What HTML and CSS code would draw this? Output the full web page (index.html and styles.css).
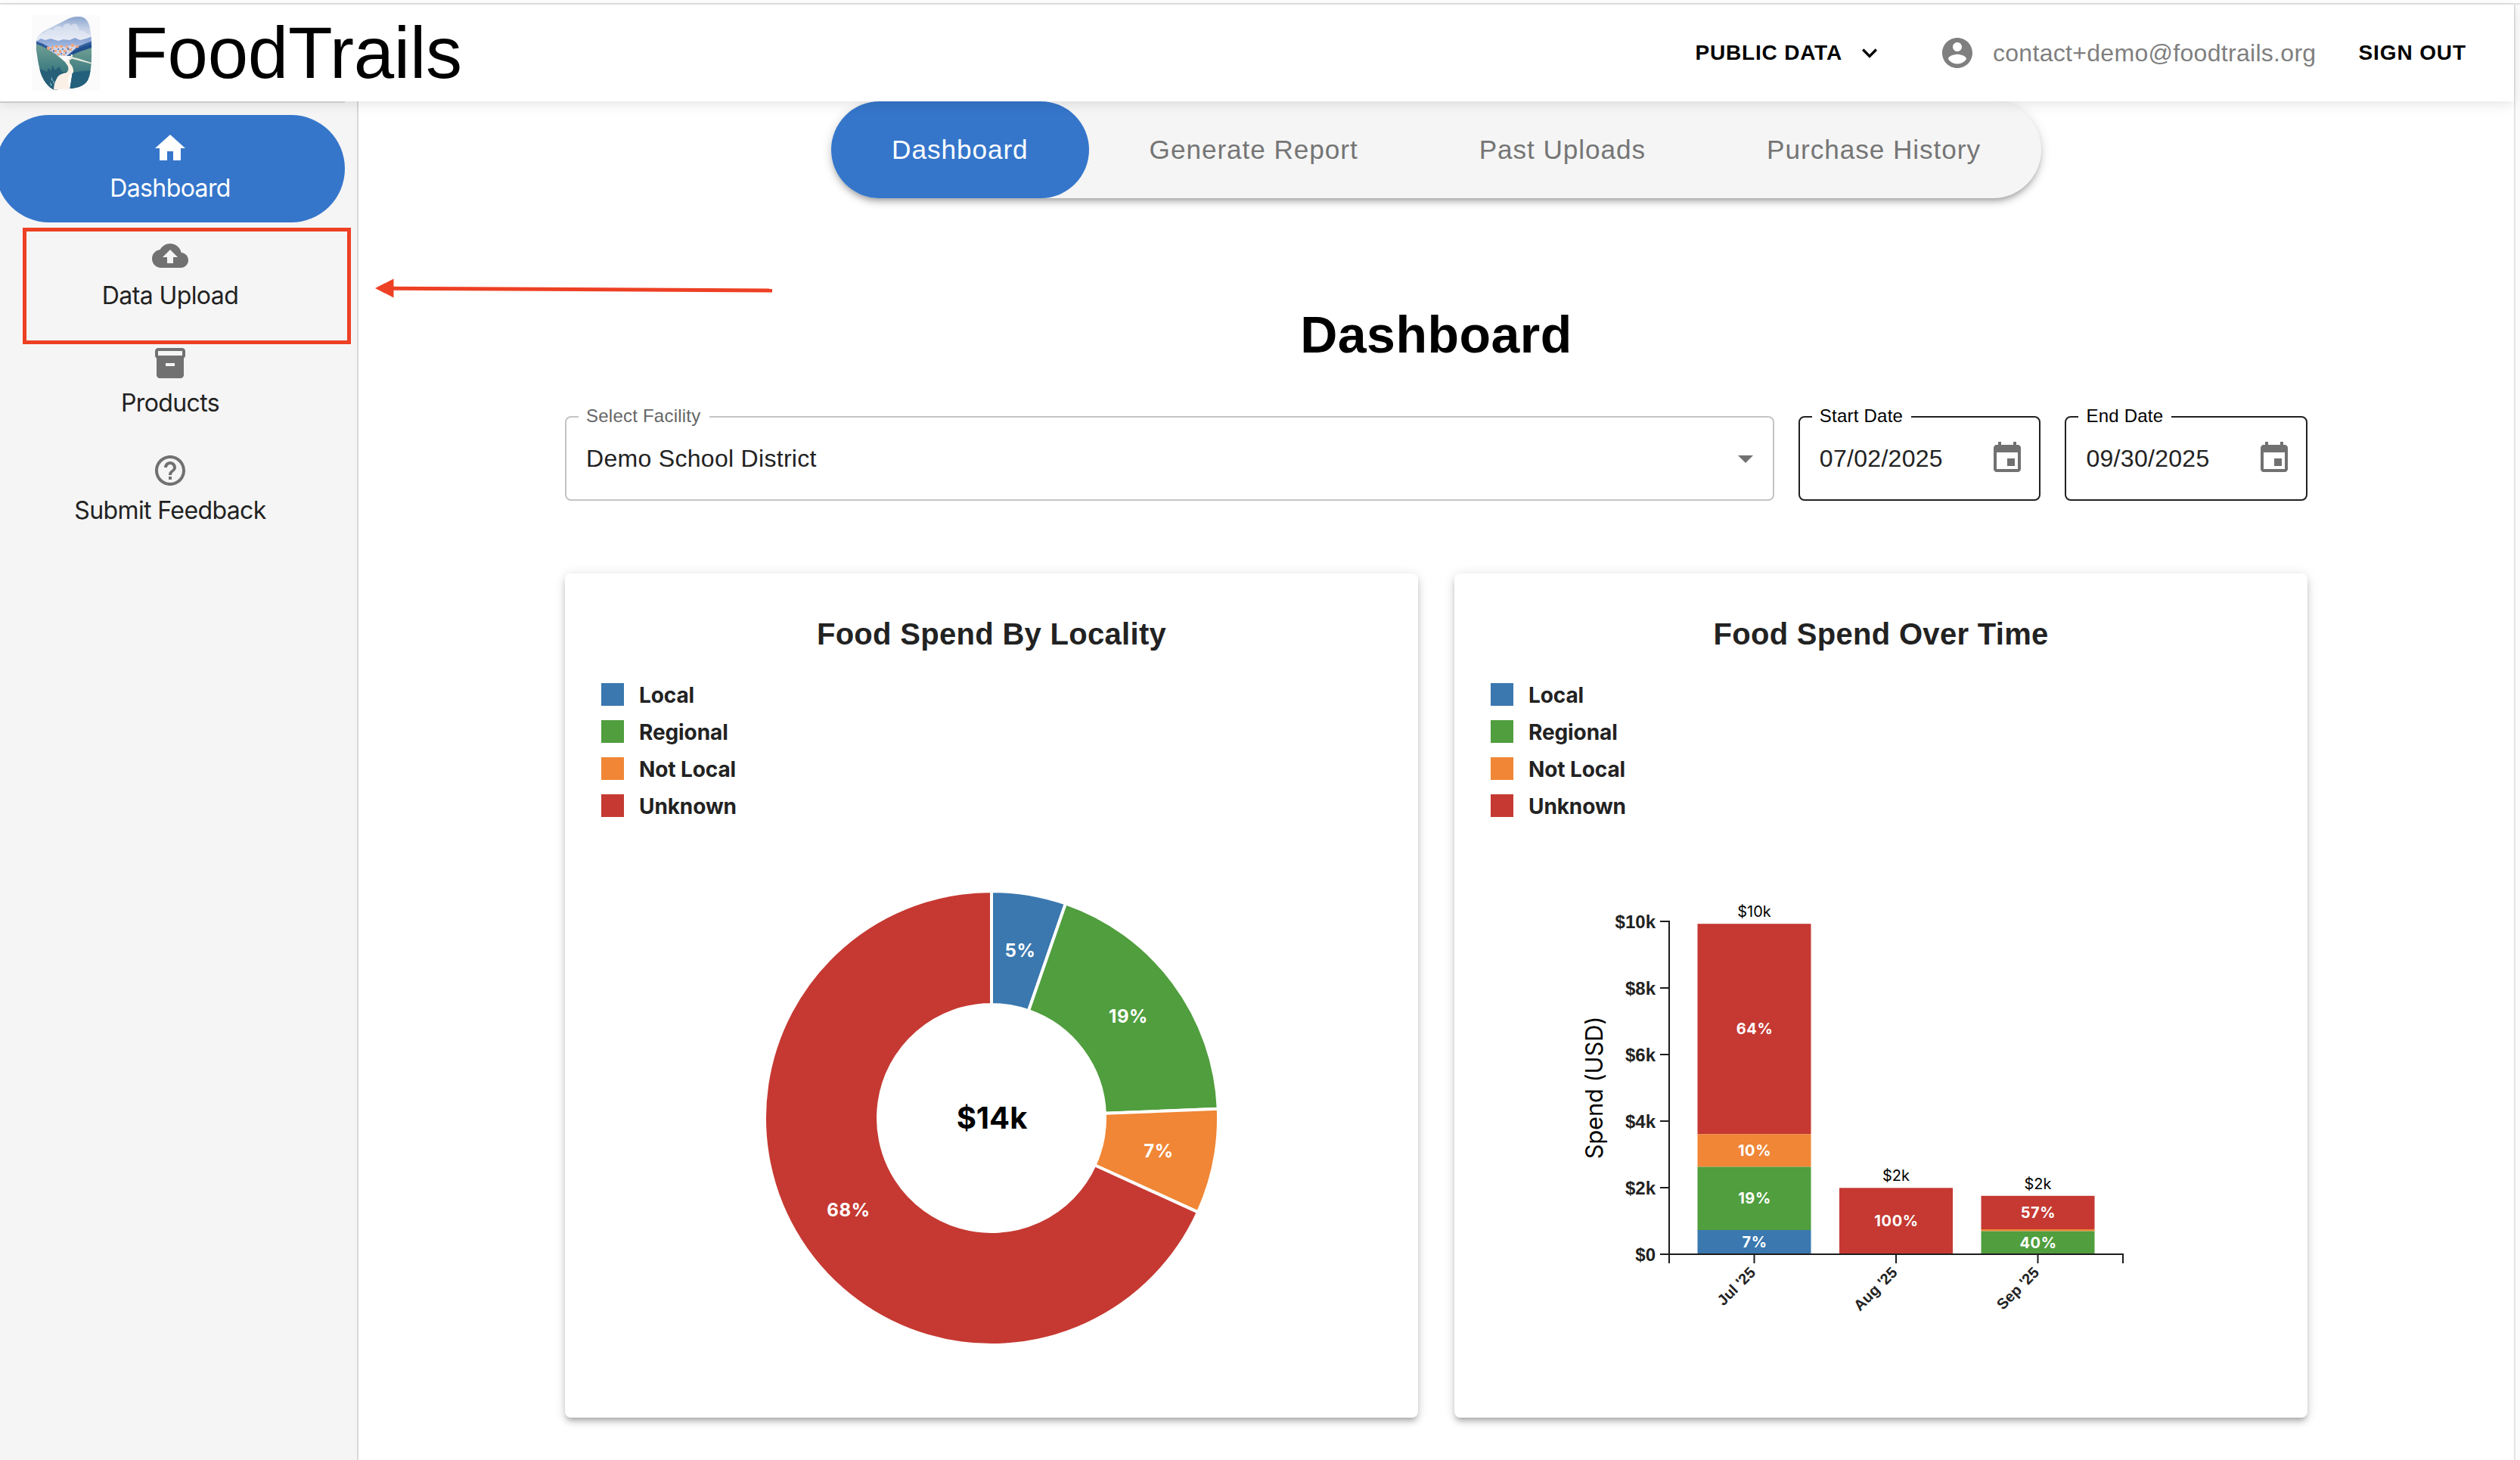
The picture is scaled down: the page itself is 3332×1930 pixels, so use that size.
FILE: index.html
```html
<!DOCTYPE html>
<html lang="en">
<head>
<meta charset="utf-8">
<title>FoodTrails</title>
<link rel="stylesheet" href="styles.css">
</head>
<body>
<div class="window-edge"></div>
<div class="viewport">
<div class="app">
  <header class="topbar">
    <svg class="logo" viewBox="0 0 90 100">
      <defs>
        <linearGradient id="sky" x1="0" y1="0" x2="0" y2="1"><stop offset="0" stop-color="#839fcb"/><stop offset=".4" stop-color="#c3d0e6"/><stop offset="1" stop-color="#eef1f8"/></linearGradient>
        <linearGradient id="cloud" x1="0" y1="0" x2="0" y2="1"><stop offset="0" stop-color="#cfd9ec"/><stop offset="1" stop-color="#f1f3f9"/></linearGradient>
        <linearGradient id="range" x1="0" y1="0" x2="0" y2="1"><stop offset="0" stop-color="#7e9bd0"/><stop offset="1" stop-color="#b9cbea"/></linearGradient>
        <linearGradient id="hill" x1="0" y1="0" x2="0" y2="1"><stop offset="0" stop-color="#6f9f93"/><stop offset=".5" stop-color="#447f83"/><stop offset="1" stop-color="#23607b"/></linearGradient>
        <clipPath id="stone"><path d="M61 2C70 1 75 7 77 17C79 28 79 38 79 50C79 66 78 78 74 86C70 93 62 96 52 97L29 98.500C22 95 16 88 12 77C8 64 6 48 6 36C6 28 12 23 20 19L44 7C51 3 56 2 61 2Z"/></clipPath>
      </defs>
      <rect width="90" height="100" fill="#fbfbfb"/>
      <g clip-path="url(#stone)">
        <rect width="90" height="45" fill="url(#sky)"/>
        <path d="M5 32C10 24 16 23 17 24C18 19 24 18 29 20C29 14 37 13 41 17C42 10 50 9 52 14C55 9 62 11 63 21C66 19 71 22 72 24L80 27V42H5Z" fill="url(#cloud)"/>
        <path d="M5 35L12 31L18 33L25 31L35 34L42 32L50 33L57 30L64 33L72 31L80 28V50H5Z" fill="url(#range)"/>
        <path d="M80 34L72 37L60 42L46 54H80Z" fill="#36619f"/>
        <path d="M5 34L15 38L26 44L34 54H5Z" fill="#2f5c9c"/>
        <path d="M80 38L66 42L52 50V56H80Z" fill="#214f8d"/>
        <path d="M20 44L34 40L44 42L56 39L60 42L46 54H32Z" fill="#cfd6e6"/>
        <g fill="#f0a680"><path d="M20 42h4v4h-4zM26 41h3v4h-3zM31 40h4v3h-4zM37 40h4v3h-4zM45 40h3v4h-3zM52 38h4v4h-4zM58 40h4v3h-4zM23 47h4v3h-4zM30 46h3v3h-3zM36 46h3v4h-3zM42 46h4v3h-4zM49 44h4v3h-4zM33 51h4v2h-4zM41 51h3v2h-3z"/></g>
        <g fill="#5f82bb"><path d="M24 44h2v2h-2zM28 46h2v3h-2zM34 44h2v2h-2zM40 44h2v2h-2zM44 49h2v2h-2zM38 50h2v2h-2zM47 43h2v3h-2zM30 51h2v2h-2z"/></g>
        <path d="M5 38C20 43 33 52 44 62L50 70L34 100H5Z" fill="url(#hill)"/>
        <path d="M80 43C66 47 56 51 52 54C48 60 50 66 54 74L50 100H80Z" fill="url(#hill)"/>
        <path d="M8 70L20 75L22 70L26 74L27 66L31 73L36 68L40 75H46L34 100H10Z" fill="#265f77"/>
        <path d="M54 75C62 76 68 72 80 74V100H50Z" fill="#23607b"/>
        <path d="M52 52L54 52L53.500 57.500L47 61L49 63L44 61L51 56.500Z" fill="#f8efe6"/>
        <path d="M52 55L64 58L79 63V64.500L62 60L51 57Z" fill="#e6eade"/>
        <path d="M44 61C49 67 50 73 46 76C40 77 35 79 33 84C30 89 29 94 29 99H52C46 92 46 80 55 76C56 68 51 64 47 61Z" fill="#fbf0e6"/>
        <path d="M26 81l2 6-2-1zM24 88l3 5-2 0zM29 86l1 5-2-2z" fill="#8fc1d2"/>
      </g>
    </svg>
    <div class="brand">FoodTrails</div>
    <nav class="account">
      <button class="public-data">PUBLIC DATA
        <svg class="chevron" viewBox="0 0 24 24"><path d="M7.410 8.590 12 13.170l4.590-4.580L18 10l-6 6-6-6z"/></svg>
      </button>
      <span class="user">
        <svg class="icon" viewBox="0 0 24 24"><path d="M12 2C6.480 2 2 6.480 2 12s4.480 10 10 10 10-4.480 10-10S17.520 2 12 2zm0 3c1.660 0 3 1.340 3 3s-1.340 3-3 3-3-1.340-3-3 1.340-3 3-3zm0 14.200c-2.500 0-4.710-1.280-6-3.220.030-1.990 4-3.080 6-3.080 1.990 0 5.970 1.090 6 3.080-1.290 1.940-3.500 3.220-6 3.220z"/></svg>
        <span class="email">contact+demo@foodtrails.org</span>
      </span>
      <button class="sign-out">SIGN OUT</button>
    </nav>
  </header>
  <div class="body">
    <aside class="sidebar">
      <div class="divider"></div>
      <a class="nav-item active">
        <svg class="icon" viewBox="0 0 24 24"><path d="M10 20v-6h4v6h5v-8h3L12 3 2 12h3v8z"/></svg>
        <span class="nav-label">Dashboard</span>
      </a>
      <a class="nav-item">
        <svg class="icon" viewBox="0 0 24 24"><path d="M19.350 10.040C18.670 6.590 15.640 4 12 4 9.110 4 6.600 5.640 5.350 8.040 2.340 8.360 0 10.910 0 14c0 3.310 2.690 6 6 6h13c2.760 0 5-2.240 5-5 0-2.640-2.050-4.780-4.650-4.960zM14 13v4h-4v-4H7l5-5 5 5h-3z"/></svg>
        <span class="nav-label">Data Upload</span>
      </a>
      <a class="nav-item">
        <svg class="icon" viewBox="0 0 24 24"><path d="M20 2H4c-1 0-2 .9-2 2v3.010c0 .720.430 1.340 1 1.690V20c0 1.100 1.100 2 2 2h14c.9 0 2-.9 2-2V8.700c.570-.350 1-.970 1-1.690V4c0-1.100-1-2-2-2zm-5 12H9v-2h6v2zm5-7H4V4h16v3z"/></svg>
        <span class="nav-label">Products</span>
      </a>
      <a class="nav-item">
        <svg class="icon" viewBox="0 0 24 24"><path d="M11 18h2v-2h-2v2zm1-16C6.480 2 2 6.480 2 12s4.480 10 10 10 10-4.480 10-10S17.520 2 12 2zm0 18c-4.410 0-8-3.590-8-8s3.590-8 8-8 8 3.590 8 8-3.590 8-8 8zm0-14c-2.210 0-4 1.790-4 4h2c0-1.100.9-2 2-2s2 .9 2 2c0 2-3 1.750-3 5h2c0-2.250 3-2.500 3-5 0-2.210-1.790-4-4-4z"/></svg>
        <span class="nav-label">Submit Feedback</span>
      </a>
    </aside>
    <main class="content">
      <div class="tabs">
        <a class="tab selected">Dashboard</a>
        <a class="tab">Generate Report</a>
        <a class="tab">Past Uploads</a>
        <a class="tab">Purchase History</a>
      </div>
      <h1 class="page-title">Dashboard</h1>
      <div class="filters">
        <div class="field facility">
          <label class="field-label">Select Facility</label>
          <span class="value">Demo School District</span>
          <svg class="icon" viewBox="0 0 24 24"><path d="M7 10l5 5 5-5z"/></svg>
        </div>
        <div class="field date">
          <label class="field-label">Start Date</label>
          <span class="value">07/02/2025</span>
          <svg class="icon" viewBox="0 0 24 24"><path d="M17 12h-5v5h5v-5zM16 1v2H8V1H6v2H5c-1.110 0-1.990.9-1.990 2L3 19c0 1.100.890 2 2 2h14c1.100 0 2-.9 2-2V5c0-1.100-.9-2-2-2h-1V1h-2zm3 18H5V8h14v11z"/></svg>
        </div>
        <div class="field date">
          <label class="field-label">End Date</label>
          <span class="value">09/30/2025</span>
          <svg class="icon" viewBox="0 0 24 24"><path d="M17 12h-5v5h5v-5zM16 1v2H8V1H6v2H5c-1.110 0-1.990.9-1.990 2L3 19c0 1.100.890 2 2 2h14c1.100 0 2-.9 2-2V5c0-1.100-.9-2-2-2h-1V1h-2zm3 18H5V8h14v11z"/></svg>
        </div>
      </div>
      <div class="cards">
        <section class="card">
          <h2 class="card-title">Food Spend By Locality</h2>
          <ul class="legend">
            <li><i class="swatch local"></i><span>Local</span></li>
            <li><i class="swatch regional"></i><span>Regional</span></li>
            <li><i class="swatch not-local"></i><span>Not Local</span></li>
            <li><i class="swatch unknown"></i><span>Unknown</span></li>
          </ul>
          <svg class="chart" viewBox="-516 -358 1032 706">
            <g class="slices">
              <path class="f-local" d="M0-300A300 300 0 0 1 97.970-283.550L48.980-141.780A150 150 0 0 0 0-150Z"/>
              <path class="f-regional" d="M97.970-283.550A300 300 0 0 1 299.750-12.300L149.870-6.150A150 150 0 0 0 48.980-141.780Z"/>
              <path class="f-not-local" d="M299.750-12.300A300 300 0 0 1 272.990 124.410L136.490 62.200A150 150 0 0 0 149.870-6.150Z"/>
              <path class="f-unknown" d="M272.990 124.410A300 300 0 1 1 0-300L0-150A150 150 0 1 0 136.490 62.200Z"/>
            </g>
            <g class="slice-labels">
              <text x="38" y="-213">5%</text>
              <text x="181" y="-126">19%</text>
              <text x="221" y="52">7%</text>
              <text x="-189" y="129.500">68%</text>
            </g>
            <text class="total" x="0.500" y="14">$14k</text>
          </svg>
        </section>
        <section class="card">
          <h2 class="card-title">Food Spend Over Time</h2>
          <ul class="legend">
            <li><i class="swatch local"></i><span>Local</span></li>
            <li><i class="swatch regional"></i><span>Regional</span></li>
            <li><i class="swatch not-local"></i><span>Not Local</span></li>
            <li><i class="swatch unknown"></i><span>Unknown</span></li>
          </ul>
          <svg class="chart" viewBox="-236 -98 1032 706">
            <g class="bars">
              <rect class="f-unknown" x="37.500" y="3.200" width="150" height="278"/>
              <rect class="f-not-local" x="37.500" y="281.200" width="150" height="43.300"/>
              <rect class="f-regional" x="37.500" y="324.500" width="150" height="83.500"/>
              <rect class="f-local" x="37.500" y="408" width="150" height="32"/>
              <rect class="f-unknown" x="225" y="352.300" width="150" height="87.700"/>
              <rect class="f-unknown" x="412.500" y="362.800" width="150" height="44.200"/>
              <rect class="f-not-local" x="412.500" y="407" width="150" height="2.500"/>
              <rect class="f-regional" x="412.500" y="409.500" width="150" height="30.500"/>
            </g>
            <path class="axis" d="M-12 0H0V452M-12 440H600V452M-12 88H0M-12 176H0M-12 264H0M-12 352H0M112.500 440V452M300 440V452M487.500 440V452"/>
            <g class="y-ticks">
              <text x="-18" y="8.500">$10k</text>
              <text x="-18" y="96.500">$8k</text>
              <text x="-18" y="184.500">$6k</text>
              <text x="-18" y="272.500">$4k</text>
              <text x="-18" y="360.500">$2k</text>
              <text x="-18" y="448.500">$0</text>
            </g>
            <g class="x-ticks">
              <text transform="translate(112.500 440) rotate(-45)" x="-16" y="20">Jul '25</text>
              <text transform="translate(300 440) rotate(-45)" x="-16" y="20">Aug '25</text>
              <text transform="translate(487.500 440) rotate(-45)" x="-16" y="20">Sep '25</text>
            </g>
            <text class="axis-title" transform="translate(-88 220) rotate(-90)">Spend (USD)</text>
            <g class="bar-totals">
              <text x="112.500" y="-6.500">$10k</text>
              <text x="300" y="343">$2k</text>
              <text x="487.500" y="353.500">$2k</text>
            </g>
            <g class="bar-labels">
              <text x="113" y="148.800">64%</text>
              <text x="113" y="310">10%</text>
              <text x="113" y="373">19%</text>
              <text x="113" y="430.800">7%</text>
              <text x="300.500" y="403">100%</text>
              <text x="488" y="391.800">57%</text>
              <text x="488" y="431.700">40%</text>
            </g>
          </svg>
        </section>
      </div>
    </main>
  </div>
</div>
<div class="gutter"></div>
</div>
<div class="highlight"></div>
<svg class="pointer" viewBox="0 0 530 30"><path d="M24 11.300L525 14"/><polygon points="0,11 24.500,-1.500 24.500,23.500"/></svg>
</body>
</html>
```
FILE: styles.css
```css
* { box-sizing: border-box; }
body {
  margin: 0;
  width: 3332px;
  height: 1930px;
  overflow: hidden;
  position: relative;
  background: #fff;
  color: #222;
  font-family: "Liberation Sans", Arial, sans-serif;
  font-size: 32px;
  letter-spacing: 0.3px;
}
button { font: inherit; border: 0; background: none; padding: 0; color: #000; }
.icon { width: 48px; height: 48px; fill: #717171; flex: none; display: block; }

.window-edge { height: 6px; border-bottom: 2px solid #e2e2e2; }
.viewport { display: flex; height: 1924px; }
.app { width: 3324px; display: flex; flex-direction: column; }
.gutter { width: 8px; border-left: 2px solid #e4e4e4; background: #fbfbfb; }

.topbar {
  height: 128px;
  flex: none;
  display: flex;
  align-items: center;
  padding: 0 63px 0 42px;
  background: #fff;
  position: relative;
  z-index: 2;
  box-shadow: 0 4px 16px rgba(0, 0, 0, 0.1);
}
.logo { width: 90px; height: 100px; flex: none; }
.brand { margin-left: 31px; font-size: 96px; line-height: 112px; color: #000; letter-spacing: -0.2px; }
.account { margin-left: auto; display: flex; align-items: center; }
.public-data, .sign-out { font-size: 28px; font-weight: 700; letter-spacing: 0.8px; }
.public-data { display: flex; align-items: center; }
.chevron { width: 40px; height: 40px; margin-left: 16px; }
.user { display: flex; align-items: center; margin-left: 72px; color: #7f7f7f; }
.user .icon { fill: #7f7f7f; margin-right: 23px; }
.sign-out { margin-left: 56px; }
.sign-out { letter-spacing: 0.9px; }

.body { flex: 1; display: flex; }
.sidebar { width: 474px; flex: none; background: #f5f5f5; border-right: 2px solid #d8d8d8; }
.divider { width: 456px; height: 2px; margin-bottom: 16px; background: #cbcbcb; position: relative; z-index: 3; }
.nav-item {
  width: 462px;
  height: 142px;
  margin-left: -6px;
  padding-top: 20px;
  border-radius: 71px;
  display: flex;
  flex-direction: column;
  align-items: center;
  gap: 4px;
}
.nav-label { font-family: Inter, "Liberation Sans", sans-serif; line-height: 49px; letter-spacing: -0.6px; }
.active { background: #3576cb; color: #fff; }
.active .icon { fill: #fff; }

.content { flex: 1; display: flex; flex-direction: column; align-items: center; }
.tabs {
  display: flex;
  height: 128px;
  border-radius: 64px;
  background: #f5f5f5;
  box-shadow: 0 6px 6px -4px rgba(0, 0, 0, 0.2), 0 6px 8px rgba(0, 0, 0, 0.14), 0 2px 16px rgba(0, 0, 0, 0.12);
}
.tab { padding: 0 80px; border-radius: 64px; font-size: 35.2px; line-height: 128px; letter-spacing: 0.93px; color: #757575; }
.selected { background: #3576cb; color: #fff; }
.page-title { margin: 138px 0 65px; font-size: 68px; line-height: 85px; letter-spacing: 0.5px; color: #000; }

.filters { width: 2304px; display: flex; gap: 32px; }
.field {
  position: relative;
  height: 112px;
  border: 2px solid #c4c4c4;
  border-radius: 8px;
  display: flex;
  align-items: center;
  justify-content: space-between;
  padding: 0 12px 0 26px;
}
.facility { flex: 1; }
.date { width: 320.6px; border-color: #212121; padding-right: 18px; }
.field-label {
  position: absolute;
  left: 16px;
  top: -16px;
  padding: 0 11px 0 10px;
  background: #fff;
  font-size: 24px;
  line-height: 28px;
  letter-spacing: 0.23px;
  color: #666;
}
.date .field-label { color: #000; }

.cards { width: 2304px; margin-top: 96px; display: flex; gap: 48px; }
.card {
  width: 1128px;
  height: 1116px;
  padding: 48px 48px 0;
  border-radius: 8px;
  background: #fff;
  box-shadow: 0 6px 6px -4px rgba(0, 0, 0, 0.2), 0 6px 8px rgba(0, 0, 0, 0.14), 0 2px 16px rgba(0, 0, 0, 0.12);
}
.card-title { margin: 0 0 33px; font-size: 40px; line-height: 64px; text-align: center; }
.legend {
  list-style: none;
  margin: 0;
  padding: 0;
  display: flex;
  flex-direction: column;
  gap: 19px;
  font: 700 28px/30px Inter, "Liberation Sans", sans-serif;
  letter-spacing: -0.1px;
}
.legend li { display: flex; gap: 20px; height: 30px; }
.legend span { padding-top: 1px; }
.swatch { width: 30px; height: 30px; }
.local { background: #3a78af; }
.regional { background: #509e3e; }
.not-local { background: #f08636; }
.unknown { background: #c53932; }

.chart { display: block; width: 1032px; height: 706px; margin-top: 40px; font-family: Inter, "Liberation Sans", sans-serif; letter-spacing: 0; }
.f-local { fill: #3a78af; }
.f-regional { fill: #509e3e; }
.f-not-local { fill: #f08636; }
.f-unknown { fill: #c53932; }
.slices { stroke: #fff; stroke-width: 4; stroke-linejoin: round; }
.slice-labels { font-size: 24px; font-weight: 700; fill: #fff; text-anchor: middle; letter-spacing: 0.6px; }
.total { font-size: 40px; font-weight: 700; fill: #000; text-anchor: middle; }
.axis { fill: none; stroke: #1c1c1c; stroke-width: 2; }
.y-ticks { font: 700 24px "Liberation Sans", Arial, sans-serif; fill: #222; text-anchor: end; }
.x-ticks { font: 700 20px "Liberation Sans", Arial, sans-serif; fill: #222; text-anchor: end; }
.axis-title { font-size: 31px; fill: #000; text-anchor: middle; letter-spacing: -0.2px; }
.bar-totals { font-size: 20px; fill: #000; text-anchor: middle; }
.bar-labels { font-size: 20px; font-weight: 700; fill: #fff; text-anchor: middle; letter-spacing: 0.6px; }

.highlight { position: absolute; left: 30px; top: 301px; width: 434px; height: 154px; border: 5px solid #ed4024; }
.pointer { position: absolute; left: 496px; top: 370px; width: 530px; height: 30px; overflow: visible; fill: #ed4024; }
.pointer path { stroke: #ed4024; stroke-width: 5; }
```
